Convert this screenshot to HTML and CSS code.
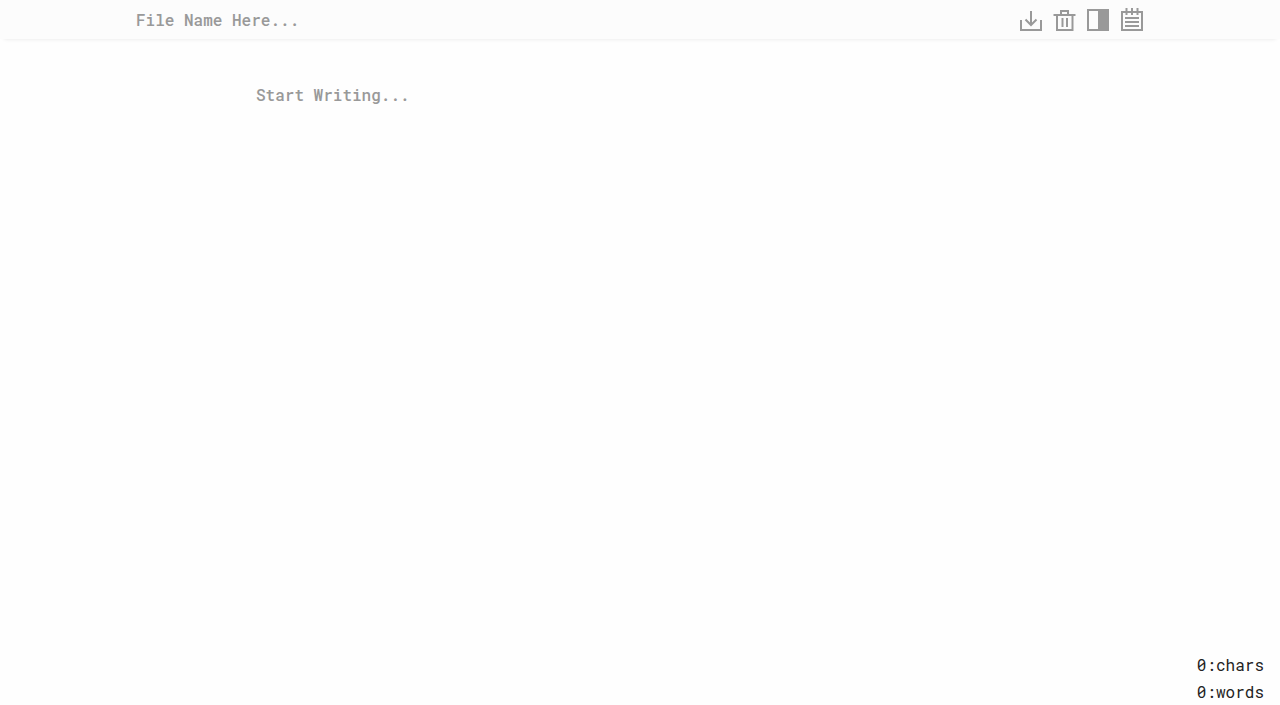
FILE: index.html
```html
<!DOCTYPE html>
<html lang="en">
<head>
    <meta charset="UTF-8">
    <meta name="viewport" content="width=device-width, initial-scale=1.0">
    <title>Writer</title>
    <link rel="stylesheet" href="styles.css">
</head>
<body>
    <header class="topbar">
        <input type="text" class="file-name" id="fileName" placeholder="File Name Here..." aria-label="File name" spellcheck="false">
        <div class="actions">
            <button type="button" id="download" aria-label="Download">
                <svg viewBox="0 0 24 24"><path d="M3 12v10h20V12M13 3v14M7.5 11.5l5.5 5.5 5.5-5.5"/></svg>
            </button>
            <button type="button" id="clear" aria-label="Delete">
                <svg viewBox="0 0 24 24"><path d="M1.5 7h22M9 7V3h7v4M5 7v15h15.5V7M10.5 10v9M15 10v9"/></svg>
            </button>
            <button type="button" id="theme" aria-label="Change theme">
                <svg viewBox="0 0 24 24"><path d="M2 2h20v20H2z"/><path class="filled" d="M13 2h9v20h-9z"/></svg>
            </button>
            <button type="button" id="notes" aria-label="Notes">
                <svg viewBox="0 0 24 24"><path d="M2 4h20v18H2zM6.5 0v7M12 0v7M17.5 0v7M5 10h14M5 14h14M5 18h14"/></svg>
            </button>
        </div>
    </header>

    <main class="editor">
        <textarea class="writing" id="writing" placeholder="Start Writing..." aria-label="Text" spellcheck="false"></textarea>
    </main>

    <footer class="counter">
        <div><span id="chars">0</span>:chars</div>
        <div><span id="words">0</span>:words</div>
    </footer>

    <script>
        const writing = document.getElementById('writing');

        function updateCount() {
            const text = writing.value;
            document.getElementById('chars').textContent = text.length;
            document.getElementById('words').textContent = text.split(/\s+/).filter(Boolean).length;
        }

        writing.addEventListener('input', updateCount);
    </script>
</body>
</html>
```
FILE: styles.css
```css
* {
    box-sizing: border-box;
}
body {
    margin: 0;
    min-height: 100vh;
    display: flex;
    flex-direction: column;
    background-color: #fefefe;
    color: #222;
    font-family: "Roboto Mono", "DejaVu Sans Mono", monospace;
    font-size: 16px;
}
.topbar {
    display: flex;
    justify-content: space-between;
    align-items: flex-start;
    height: 39px;
    padding: 8px calc(10% + 8px) 0;
    background-color: #fcfcfc;
    box-shadow: 0 4px 4px -4px rgba(0, 0, 0, 0.1);
}
.file-name, .writing {
    padding: 0;
    border: none;
    outline: none;
    background: transparent;
    color: #222;
    font: inherit;
    font-weight: 500;
}
.file-name {
    flex: 1;
    height: 22px;
}
.file-name::placeholder, .writing::placeholder {
    color: #999;
    opacity: 1;
}
.actions {
    display: flex;
    gap: 10px;
}
.actions button {
    width: 24px;
    height: 24px;
    padding: 0;
    border: none;
    background: none;
    cursor: pointer;
}
.actions svg {
    display: block;
    fill: none;
    stroke: #999;
    stroke-width: 2;
}
.actions .filled {
    fill: #999;
}
.editor {
    flex: 1;
    display: flex;
    padding: 42px 20% 0;
}
.writing {
    flex: 1;
    resize: none;
    line-height: 27px;
}
.counter {
    align-self: flex-end;
    padding: 0 16px 0 0;
    line-height: 27px;
}
```
